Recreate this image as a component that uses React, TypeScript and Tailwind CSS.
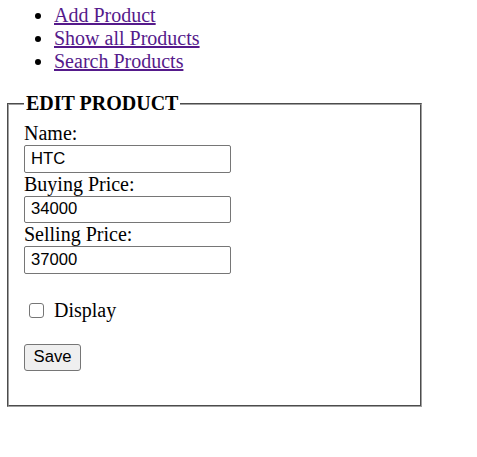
import React from "react";

export default function App() {
  return (
    <div className="w-[477px] h-[457px] bg-white text-black font-['Liberation_Serif','Times_New_Roman',serif] text-[20px] leading-[23px]">
      <ul className="list-disc pl-[54px] pt-[4px]">
        <li>
          <a href="#" className="text-[#551a8b] underline">Add Product</a>
        </li>
        <li>
          <a href="#" className="text-[#551a8b] underline">Show all Products</a>
        </li>
        <li>
          <a href="#" className="text-[#551a8b] underline">Search Products</a>
        </li>
      </ul>
      <fieldset className="mt-[19px] ml-[7px] w-[415px] border-2 [border-style:groove] border-[#a0a0a0] px-[15px] pt-[7px] pb-[34px]">
        <legend className="px-[2px] font-bold">EDIT PRODUCT</legend>
        <label className="block">Name:</label>
        <input
          readOnly
          value="HTC"
          className="block w-[207px] h-[27.5px] border border-[#767676] rounded-[2px] px-[6px] font-['Liberation_Sans',Arial,sans-serif] text-[16.67px] text-black outline-none"
        />
        <label className="block">Buying Price:</label>
        <input
          readOnly
          value="34000"
          className="block w-[207px] h-[27.5px] border border-[#767676] rounded-[2px] px-[6px] font-['Liberation_Sans',Arial,sans-serif] text-[16.67px] text-black outline-none"
        />
        <label className="block">Selling Price:</label>
        <input
          readOnly
          value="37000"
          className="block w-[207px] h-[27.5px] border border-[#767676] rounded-[2px] px-[6px] font-['Liberation_Sans',Arial,sans-serif] text-[16.67px] text-black outline-none"
        />
        <div className="flex items-center mt-[25px] h-[23px]">
          <input
            type="checkbox"
            className="appearance-none ml-[5px] w-[15px] h-[15px] border border-[#767676] rounded-[3px] bg-white"
          />
          <span className="ml-[10px]">Display</span>
        </div>
        <button className="block mt-[22px] w-[57px] h-[27px] bg-[#efefef] border border-[#767676] rounded-[3px] font-['Liberation_Sans',Arial,sans-serif] text-[16.67px] leading-none text-black">
          Save
        </button>
      </fieldset>
    </div>
  );
}
